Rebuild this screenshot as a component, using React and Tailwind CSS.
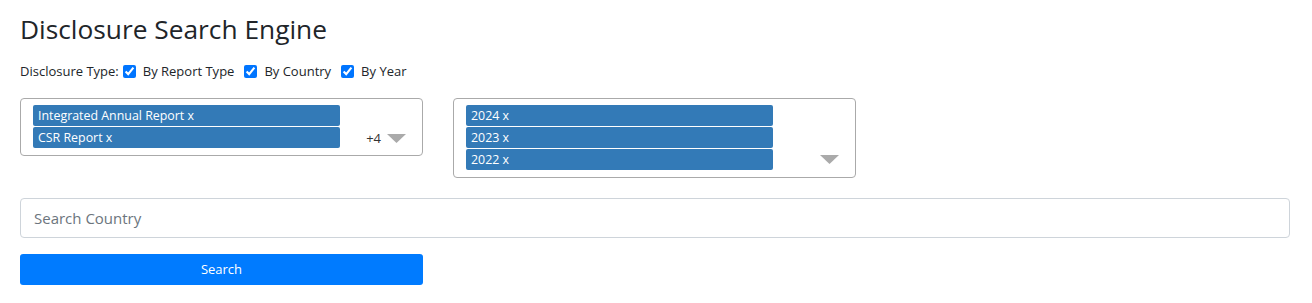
function Tag({ label }) {
  return (
    <div className="h-[21px] w-[307px] rounded-[2px] bg-[#337ab7] pl-[5px] text-[12.4px] leading-[21px] text-white">
      {label}
    </div>
  );
}

function Caret() {
  return (
    <svg width="19" height="9" viewBox="0 0 19 9" className="shrink-0">
      <polygon points="0,0 19,0 9.5,9" fill="#aaaaaa" />
    </svg>
  );
}

function Check({ label }) {
  return (
    <label className="flex items-center gap-[7px]">
      <input type="checkbox" defaultChecked className="m-0 h-[13px] w-[13px] accent-[#0075ff]" />
      <span>{label}</span>
    </label>
  );
}

export default function App() {
  return (
    <div className="min-h-[303px] bg-white px-5 pt-[12px] text-[#212529] [font-family:'Open_Sans','Noto_Sans',sans-serif]">
      <h3 className="text-[26.3px] font-normal leading-[34px] text-[#212529]">Disclosure Search Engine</h3>

      <div className="mt-[15px] flex items-center gap-[10px] text-[13px] leading-[20px]">
        <span className="-mr-[6px]">Disclosure Type:</span>
        <Check label="By Report Type" />
        <Check label="By Country" />
        <Check label="By Year" />
      </div>

      <div className="mt-[17px] flex items-start gap-[30px]">
        <div className="flex h-[58px] w-[403px] items-end rounded-[4px] border border-[#aaaaaa] pb-[6px] pl-3 pr-4 pt-[6px]">
          <div className="flex flex-col gap-[1px] self-start">
            <Tag label="Integrated Annual Report x" />
            <Tag label="CSR Report x" />
          </div>
          <div className="ml-auto flex items-center gap-[6px] pb-[2px]">
            <span className="text-[13px] leading-[18px] text-[#333]">+4</span>
            <Caret />
          </div>
        </div>

        <div className="flex h-[80px] w-[403px] items-end rounded-[4px] border border-[#aaaaaa] pb-[13px] pl-3 pr-4 pt-[6px]">
          <div className="flex flex-col gap-[1px] self-start">
            <Tag label="2024 x" />
            <Tag label="2023 x" />
            <Tag label="2022 x" />
          </div>
          <div className="ml-auto">
            <Caret />
          </div>
        </div>
      </div>

      <input
        type="text"
        placeholder="Search Country"
        className="mt-5 block h-[40px] w-[1270px] rounded-[4px] border border-[#ced4da] px-[13px] text-[15px] text-[#495057] outline-none placeholder:text-[#6c757d]"
      />

      <button className="mt-4 block h-[31px] w-[403px] rounded-[3px] bg-[#007bff] text-[13px] text-white">
        Search
      </button>
    </div>
  );
}
